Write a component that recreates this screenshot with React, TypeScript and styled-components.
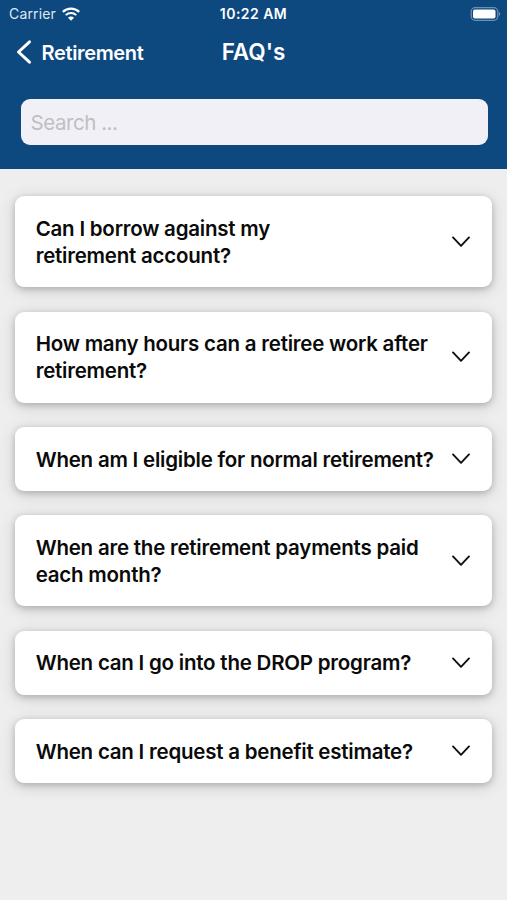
import React from "react";
import styled, { createGlobalStyle } from "styled-components";

const Global = createGlobalStyle`
  * { box-sizing: border-box; }
  body { margin: 0; background: #eee; font-family: Inter, "Liberation Sans", sans-serif; }
`;
const Screen = styled.main`
  width: 507px;
  height: 900px;
  background: #eeeeee;
  overflow: hidden;
`;
const Header = styled.header`
  height: 169px;
  background: #0d487f;
  color: #fff;
`;
const StatusBar = styled.div`
  height: 27px;
  display: grid;
  grid-template-columns: 1fr auto 1fr;
  align-items: center;
  padding: 0 6px 0 9px;
`;
const Carrier = styled.div`
  display: flex;
  align-items: center;
  gap: 6px;
  font-size: 14px;
  line-height: 27px;
  color: #dfe8f0;
`;
const Label = styled.span`
  display: block;
  width: 47px;
  white-space: nowrap;
  letter-spacing: 0.15px;
`;
const Clock = styled.time`
  margin-left: -3px;
  font-size: 14px;
  font-weight: 600;
  letter-spacing: 0.45px;
`;
const Battery = styled.svg`
  justify-self: end;
`;
const NavBar = styled.nav`
  height: 50px;
  display: grid;
  grid-template-columns: 1fr auto 1fr;
  align-items: center;
  padding: 0 16px;
`;
const Back = styled.button`
  display: flex;
  align-items: center;
  gap: 9.5px;
  padding: 0;
  border: 0;
  background: none;
  color: inherit;
  font: 600 20px/24px Inter, sans-serif;
  letter-spacing: -0.35px;
`;
const BackLabel = styled.span`
  padding-top: 1px;
`;
const Title = styled.h1`
  margin: 0;
  font-size: 22.5px;
  line-height: 28px;
  font-weight: 600;
`;
const Search = styled.input`
  display: block;
  width: 467px;
  height: 46.5px;
  margin: 21.5px 20.5px 0;
  padding: 1px 10px 0;
  border: 0;
  border-radius: 9px;
  background: #f1f0f6;
  font: 400 20.5px/24px Inter, sans-serif;
  letter-spacing: -0.45px;
  &::placeholder { color: #bfbfc3; opacity: 1; }
`;
const List = styled.section`
  display: flex;
  flex-direction: column;
  gap: 24.3px;
  padding: 27.4px 15px 27.4px 15.4px;
`;
const Card = styled.article<{ $h: number }>`
  height: ${(p) => p.$h}px;
  display: flex;
  align-items: center;
  justify-content: space-between;
  padding: 0.5px 22px 0 20.3px;
  border-radius: 9px;
  background: #fff;
  box-shadow: 0 3px 16px rgba(0, 0, 0, 0.16), 0 2px 6px rgba(0, 0, 0, 0.18);
`;
const Question = styled.h2`
  margin: 0;
  color: #0a0a0a;
  font-size: 20.5px;
  font-weight: 600;
  line-height: 27px;
  letter-spacing: -0.22px;
  white-space: pre;
`;
const Chevron = styled.svg`
  flex: none;
`;

const items = [
  { text: "Can I borrow against my\nretirement account?", h: 91 },
  { text: "How many hours can a retiree work after\nretirement?", h: 91 },
  { text: "When am I eligible for normal retirement?", h: 64 },
  { text: "When are the retirement payments paid\neach month?", h: 91 },
  { text: "When can I go into the DROP program?", h: 64 },
  { text: "When can I request a benefit estimate?", h: 64 },
];

export default function App() {
  return (
    <Screen>
      <Global />
      <Header>
        <StatusBar>
          <Carrier>
            <Label>Carrier</Label>
            <svg width="18" height="14" viewBox="0 0 18 14" fill="none" stroke="#fff">
              <path d="M0.8 4.9A11.8 11.8 0 0 1 17.2 4.9" strokeWidth="2.2" />
              <path d="M3.7 8.1A7.6 7.6 0 0 1 14.3 8.1" strokeWidth="2" />
              <path d="M6 10.8A4.2 4.2 0 0 1 12 10.8L9 13.8Z" fill="#fff" stroke="none" />
            </svg>
          </Carrier>
          <Clock>10:22 AM</Clock>
          <Battery width="31" height="14" viewBox="0 0 31 14">
            <rect x="1.2" y="0.7" width="26.6" height="12.6" rx="4" fill="none" stroke="#6c90b2" strokeWidth="1.3" />
            <rect x="3" y="2.5" width="22.5" height="9" rx="2" fill="#fff" />
            <path d="M29 5q2 2 0 4z" fill="#8ba7c1" />
          </Battery>
        </StatusBar>
        <NavBar>
          <Back>
            <svg width="16" height="26" viewBox="0 0 16 26" fill="none" stroke="#fff" strokeWidth="3" strokeLinecap="round" strokeLinejoin="round">
              <path d="M13.5 2.8L2.5 13L13.5 23.2" />
            </svg>
            <BackLabel>Retirement</BackLabel>
          </Back>
          <Title>FAQ's</Title>
        </NavBar>
        <Search placeholder="Search ..." aria-label="Search" />
      </Header>
      <List>
        {items.map((q) => (
          <Card key={q.text} $h={q.h}>
            <Question>{q.text}</Question>
            <Chevron width="18" height="12" viewBox="0 0 18 12" fill="none" stroke="#111" strokeWidth="1.9" strokeLinecap="round" strokeLinejoin="round">
              <path d="M1 1.4L9 9.8L17 1.4" />
            </Chevron>
          </Card>
        ))}
      </List>
    </Screen>
  );
}
